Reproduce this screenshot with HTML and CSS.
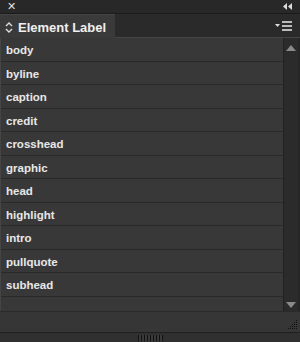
FILE: index.html
```html
<!DOCTYPE html>
<html lang="en">

<head>
    <meta charset="UTF-8">
    <title>Element Label</title>
    <link rel="stylesheet" href="styles.css">
</head>

<body>
    <div class="panel">
        <div class="titlebar">
            <span class="close">&#x2715;</span>
            <svg class="collapse" width="9" height="7" viewBox="0 0 9 7">
                <polygon points="4,0 4,7 0,3.5" fill="#ddd"/>
                <polygon points="9,0 9,7 5,3.5" fill="#ddd"/>
            </svg>
        </div>
        <div class="tabbar">
            <div class="tab">
                <svg class="updown" width="8" height="11" viewBox="0 0 8 11">
                    <polyline points="1,4 4,1 7,4" fill="none" stroke="#ddd" stroke-width="1.4"/>
                    <polyline points="1,7 4,10 7,7" fill="none" stroke="#ddd" stroke-width="1.4"/>
                </svg>
                <span>Element Label</span>
            </div>
            <div class="tab-rest">
                <svg class="menu" width="18" height="10" viewBox="0 0 18 10">
                    <polygon points="0,3 5,3 2.5,6" fill="#ddd"/>
                    <rect x="7" y="0" width="10" height="2" fill="#bbb"/>
                    <rect x="7" y="4" width="10" height="2" fill="#bbb"/>
                    <rect x="7" y="8" width="10" height="2" fill="#bbb"/>
                </svg>
            </div>
        </div>
        <div class="content">
            <ul class="list">
                <li>body</li>
                <li>byline</li>
                <li>caption</li>
                <li>credit</li>
                <li>crosshead</li>
                <li>graphic</li>
                <li>head</li>
                <li>highlight</li>
                <li>intro</li>
                <li>pullquote</li>
                <li>subhead</li>
            </ul>
            <div class="scrollbar">
                <svg class="arrow" width="10" height="6" viewBox="0 0 10 6">
                    <polygon points="0,6 10,6 5,0" fill="#8a8a8a"/>
                </svg>
                <svg class="arrow" width="10" height="6" viewBox="0 0 10 6">
                    <polygon points="0,0 10,0 5,6" fill="#8a8a8a"/>
                </svg>
            </div>
        </div>
        <div class="footer">
            <svg class="resize" width="12" height="12" viewBox="0 0 12 12" fill="#111">
                <rect x="10" y="1" width="1" height="1"/>
                <rect x="8" y="3" width="1" height="1"/><rect x="10" y="3" width="1" height="1"/>
                <rect x="6" y="5" width="1" height="1"/><rect x="8" y="5" width="1" height="1"/><rect x="10" y="5" width="1" height="1"/>
                <rect x="4" y="7" width="1" height="1"/><rect x="6" y="7" width="1" height="1"/><rect x="8" y="7" width="1" height="1"/><rect x="10" y="7" width="1" height="1"/>
                <rect x="2" y="9" width="1" height="1"/><rect x="4" y="9" width="1" height="1"/><rect x="6" y="9" width="1" height="1"/><rect x="8" y="9" width="1" height="1"/><rect x="10" y="9" width="1" height="1"/>
            </svg>
        </div>
        <div class="bottombar">
            <div class="grip"></div>
        </div>
    </div>
</body>

</html>
```

FILE: styles.css
```css
/* styles.css */
body {
    margin: 0;
    background-color: #262626;
    font-family: "Liberation Sans", Arial, sans-serif;
}

.panel {
    width: 300px;
    height: 342px;
    display: flex;
    flex-direction: column;
    background-color: #262626;
}

.titlebar {
    height: 13px;
    border-bottom: 1px solid #1b1b1b;
    display: flex;
    justify-content: space-between;
    align-items: center;
    padding: 0 8px 0 7px;
    background-color: #282828;
}

.close {
    color: #e0e0e0;
    font-family: "DejaVu Sans", sans-serif;
    font-size: 11px;
    line-height: 13px;
}

.tabbar {
    height: 24px;
    display: flex;
}

.tab {
    width: 115px;
    background-color: #3a3a3a;
    border-top: 1px solid #444;
    box-sizing: border-box;
    display: flex;
    align-items: center;
    padding: 1px 0 0 5px;
    gap: 5px;
    color: #f0f0f0;
    font-weight: bold;
    font-size: 13px;
}

.tab-rest {
    flex: 1;
    background-color: #2a2a2a;
    border-bottom: 1px solid #444;
    display: flex;
    justify-content: flex-end;
    align-items: center;
    padding-right: 7px;
}

.content {
    height: 273px;
    display: flex;
    background-color: #383838;
}

.list {
    flex: 1;
    margin: 0;
    padding: 0;
    list-style: none;
    border-left: 1px solid #444;
}

.list li {
    height: 23.5px;
    box-sizing: border-box;
    border-bottom: 1px solid #292929;
    padding: 1px 0 0 5px;
    line-height: 22px;
    color: #e8e8e8;
    font-weight: bold;
    font-size: 11.5px;
}

.scrollbar {
    width: 14px;
    background-color: #2b2b2b;
    border-left: 1px solid #222;
    border-right: 2px solid #262626;
    display: flex;
    flex-direction: column;
    justify-content: space-between;
    align-items: center;
    padding: 7px 0 3px;
}

.footer {
    height: 19px;
    background-color: #363636;
    border-top: 1px solid #2a2a2a;
    border-bottom: 1px solid #1f1f1f;
    display: flex;
    justify-content: flex-end;
    align-items: flex-end;
    padding: 0 2px 1px 0;
}

.bottombar {
    flex: 1;
    background-color: #303030;
    display: flex;
    justify-content: center;
    padding-top: 2px;
}

.grip {
    width: 25px;
    height: 6px;
    background: repeating-linear-gradient(90deg, #111 0 1px, #3a3a3a 1px 3px);
}
```
